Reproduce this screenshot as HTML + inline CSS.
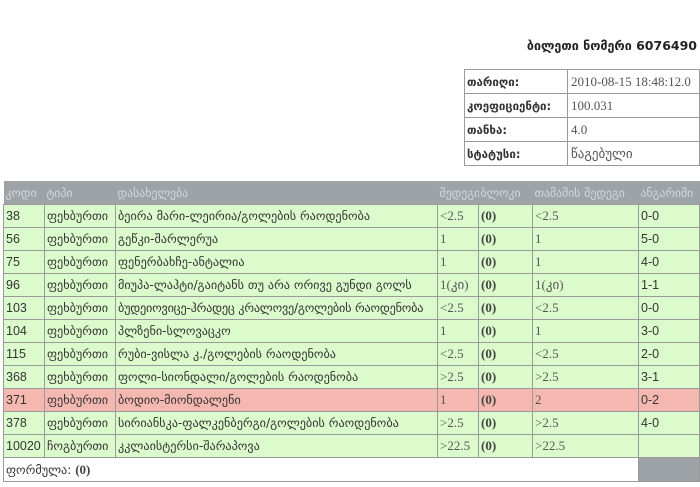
<!DOCTYPE html>
<html><head><meta charset="utf-8"><style>
body{margin:0;width:700px;height:487px;background:#fff;font-family:"DejaVu Sans","Liberation Sans",sans-serif;color:#333;font-size:12.2px;position:relative;overflow:hidden}
.title{position:absolute;right:3px;top:38px;font-weight:bold;font-size:12.5px;color:#222}
table{border-collapse:collapse;position:absolute;table-layout:fixed}
td{border:1px solid #9a9a9a;padding:0 3px;white-space:nowrap;overflow:hidden}
.info{left:464px;top:69px;width:236px}
.info td{height:23px;font-size:12px}
.info td.l{font-weight:bold;font-size:11.5px;padding:0 2px}
.info td.v{font-family:"Liberation Serif",serif;color:#555;font-size:13px;padding:0 3px}
.main{left:3px;top:181px;width:697px}
.main td{height:22px;padding:0 2px}
.main tr.h td{background:#9ea3a8;color:#d6d8da;border:none;border-bottom:1px solid #9a9a9a;height:23px;font-size:11.8px}
.main tr.g td{background:#dcfbcc}
.main tr.r td{background:#f5b8b1}
.n{font-family:"Liberation Serif",serif;color:#555;font-size:13px}
.s{font-family:"Liberation Sans",sans-serif;font-size:12.5px}
.b{font-weight:bold;font-family:"Liberation Serif",serif;color:#444;font-size:13px}
</style></head><body>
<div class="title">ბილეთი ნომერი 6076490</div>
<table class="info">
<col style="width:103px"><col>
<tr><td class="l">თარიღი:</td><td class="v">2010-08-15 18:48:12.0</td></tr>
<tr><td class="l">კოეფიციენტი:</td><td class="v">100.031</td></tr>
<tr><td class="l">თანხა:</td><td class="v">4.0</td></tr>
<tr><td class="l">სტატუსი:</td><td class="v">წაგებული</td></tr>
</table>
<table class="main">
<col style="width:41px"><col style="width:71px"><col style="width:322px"><col style="width:41px"><col style="width:54px"><col style="width:106px"><col>
<tr class="h"><td>კოდი</td><td>ტიპი</td><td>დასახელება</td><td>შედეგი</td><td>ბლოკი</td><td>თამაშის შედეგი</td><td>ანგარიში</td></tr>
<tr class="g"><td class="s">38</td><td>ფეხბურთი</td><td>ბეირა მარი-ლეირია/გოლების რაოდენობა</td><td class="n">&lt;2.5</td><td class="b">(0)</td><td class="n">&lt;2.5</td><td class="s">0-0</td></tr>
<tr class="g"><td class="s">56</td><td>ფეხბურთი</td><td>გეწკი-შარლერუა</td><td class="n">1</td><td class="b">(0)</td><td class="n">1</td><td class="s">5-0</td></tr>
<tr class="g"><td class="s">75</td><td>ფეხბურთი</td><td>ფენერბახჩე-ანტალია</td><td class="n">1</td><td class="b">(0)</td><td class="n">1</td><td class="s">4-0</td></tr>
<tr class="g"><td class="s">96</td><td>ფეხბურთი</td><td>მიუპა-ლაჰტი/გაიტანს თუ არა ორივე გუნდი გოლს</td><td class="n">1(კი)</td><td class="b">(0)</td><td class="n">1(კი)</td><td class="s">1-1</td></tr>
<tr class="g"><td class="s">103</td><td>ფეხბურთი</td><td style="letter-spacing:-0.2px">ბუდეიოვიცე-ჰრადეც კრალოვე/გოლების რაოდენობა</td><td class="n">&lt;2.5</td><td class="b">(0)</td><td class="n">&lt;2.5</td><td class="s">0-0</td></tr>
<tr class="g"><td class="s">104</td><td>ფეხბურთი</td><td>პლზენი-სლოვაცკო</td><td class="n">1</td><td class="b">(0)</td><td class="n">1</td><td class="s">3-0</td></tr>
<tr class="g"><td class="s">115</td><td>ფეხბურთი</td><td>რუბი-ვისლა კ./გოლების რაოდენობა</td><td class="n">&lt;2.5</td><td class="b">(0)</td><td class="n">&lt;2.5</td><td class="s">2-0</td></tr>
<tr class="g"><td class="s">368</td><td>ფეხბურთი</td><td>ფოლი-სიონდალი/გოლების რაოდენობა</td><td class="n">&gt;2.5</td><td class="b">(0)</td><td class="n">&gt;2.5</td><td class="s">3-1</td></tr>
<tr class="r"><td class="s">371</td><td>ფეხბურთი</td><td>ბოდიო-მიონდალენი</td><td class="n">1</td><td class="b">(0)</td><td class="n">2</td><td class="s">0-2</td></tr>
<tr class="g"><td class="s">378</td><td>ფეხბურთი</td><td>სირიანსკა-ფალკენბერგი/გოლების რაოდენობა</td><td class="n">&gt;2.5</td><td class="b">(0)</td><td class="n">&gt;2.5</td><td class="s">4-0</td></tr>
<tr class="g"><td class="s">10020</td><td>ჩოგბურთი</td><td>კკლაისტერსი-შარაპოვა</td><td class="n">&gt;22.5</td><td class="b">(0)</td><td class="n">&gt;22.5</td><td></td></tr>
<tr><td colspan="6" style="background:#fff;height:23px">ფორმულა: <span class="b">(0)</span></td><td style="background:#9ea3a8"></td></tr>
</table>
</body></html>
